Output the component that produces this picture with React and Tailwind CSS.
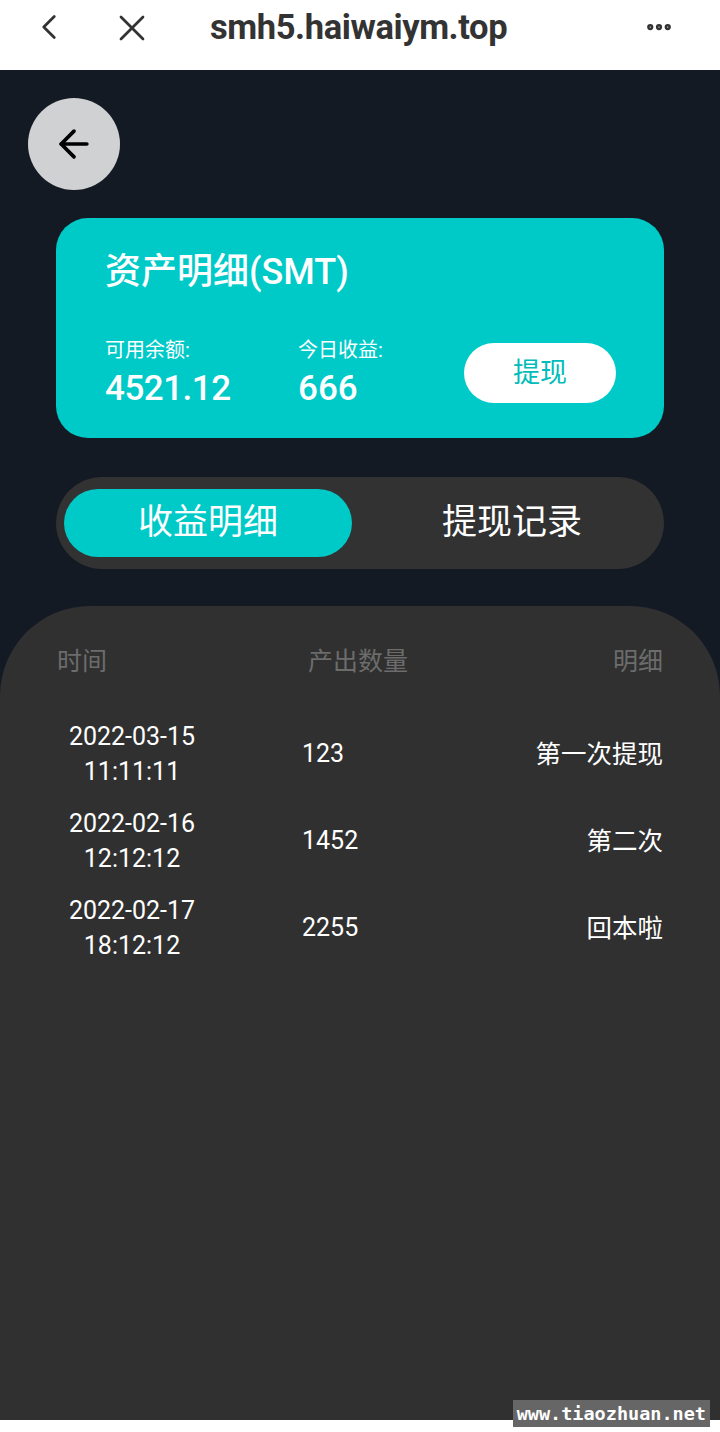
import { ArrowLeft, ChevronLeft, X, MoreHorizontal } from 'lucide-react';

const FONT = { fontFamily: 'Roboto, "Noto Sans CJK SC", sans-serif' };

const records = [
  { date: '2022-03-15', time: '11:11:11', amount: '123', note: '第一次提现' },
  { date: '2022-02-16', time: '12:12:12', amount: '1452', note: '第二次' },
  { date: '2022-02-17', time: '18:12:12', amount: '2255', note: '回本啦' },
];

export default function App() {
  return (
    <div className="relative w-[720px] h-[1432px] bg-white overflow-hidden" style={FONT}>
      {/* Browser bar */}
      <div className="h-[70px] flex items-start pt-[6px] bg-white text-[#333]">
        <ChevronLeft className="ml-[28px]" size={42} strokeWidth={1.6} />
        <X className="ml-[40px]" size={44} strokeWidth={1.5} />
        <div className="ml-[56px] text-[34.5px] font-bold tracking-[-0.4px] leading-[42px]">smh5.haiwaiym.top</div>
        <MoreHorizontal className="ml-auto mr-[46px] mt-[6px]" size={30} strokeWidth={3} />
      </div>

      <div className="h-[1350px] bg-[#131a24] flex flex-col">
        {/* Back */}
        <div className="pt-[28px] pl-[28px]">
          <div className="w-[92px] h-[92px] rounded-full bg-[#d0d1d3] flex items-center justify-center">
            <ArrowLeft size={44} strokeWidth={2} className="text-black" />
          </div>
        </div>

        {/* Asset card */}
        <div className="mx-[56px] mt-[28px] h-[220px] rounded-[32px] bg-[#00cac8] text-white pl-[49px] pr-[48px] pt-[34px]">
          <div className="text-[36px] font-medium leading-[40px]">资产明细(SMT)</div>
          <div className="flex items-start mt-[45px]">
            <div className="w-[193px]">
              <div className="text-[20px] leading-[26px]">可用余额:</div>
              <div className="mt-[4px] text-[35px] font-medium leading-[44px] tracking-[-0.5px]">4521.12</div>
            </div>
            <div className="w-[166px]">
              <div className="text-[20px] leading-[26px]">今日收益:</div>
              <div className="mt-[4px] text-[35px] font-medium leading-[44px]">666</div>
            </div>
            <div className="mt-[6px] w-[152px] h-[60px] rounded-full bg-white text-[#00bcbb] text-[27px] flex items-center justify-center">
              提现
            </div>
          </div>
        </div>

        {/* Tabs */}
        <div className="mx-[56px] mt-[39px] h-[92px] rounded-full bg-[#323232] flex items-center px-[8px]">
          <div className="w-[288px] h-[68px] rounded-full bg-[#00cac8] text-white text-[35px] flex items-center justify-center">
            收益明细
          </div>
          <div className="flex-1 pl-[16px] text-white text-[35px] text-center">提现记录</div>
        </div>

        {/* Table */}
        <div className="mt-[37px] flex-1 bg-[#303030] rounded-tl-[90px] rounded-tr-[90px] px-[57px] pt-[40px]">
          <div className="flex text-[25px] text-[#6c6c6c] leading-[32px]">
            <div className="w-[251px]">时间</div>
            <div className="w-[150px]">产出数量</div>
            <div className="flex-1 text-right">明细</div>
          </div>
          <div className="mt-[41px] flex flex-col gap-[17px]">
            {records.map((r) => (
              <div key={r.date} className="flex items-center text-white text-[25px]">
                <div className="w-[150px] text-center leading-[35px]">
                  <div>{r.date}</div>
                  <div>{r.time}</div>
                </div>
                <div className="w-[95px]" />
                <div className="w-[150px]">{r.amount}</div>
                <div className="flex-1 text-right text-[25.5px]">{r.note}</div>
              </div>
            ))}
          </div>
        </div>
      </div>

      {/* Watermark */}
      <div
        className="absolute right-[10px] bottom-[5px] h-[27px] px-[4px] bg-[#666] text-white text-[18.5px] font-bold flex items-center"
        style={{ fontFamily: '"DejaVu Sans Mono", monospace' }}
      >
        www.tiaozhuan.net
      </div>
    </div>
  );
}
